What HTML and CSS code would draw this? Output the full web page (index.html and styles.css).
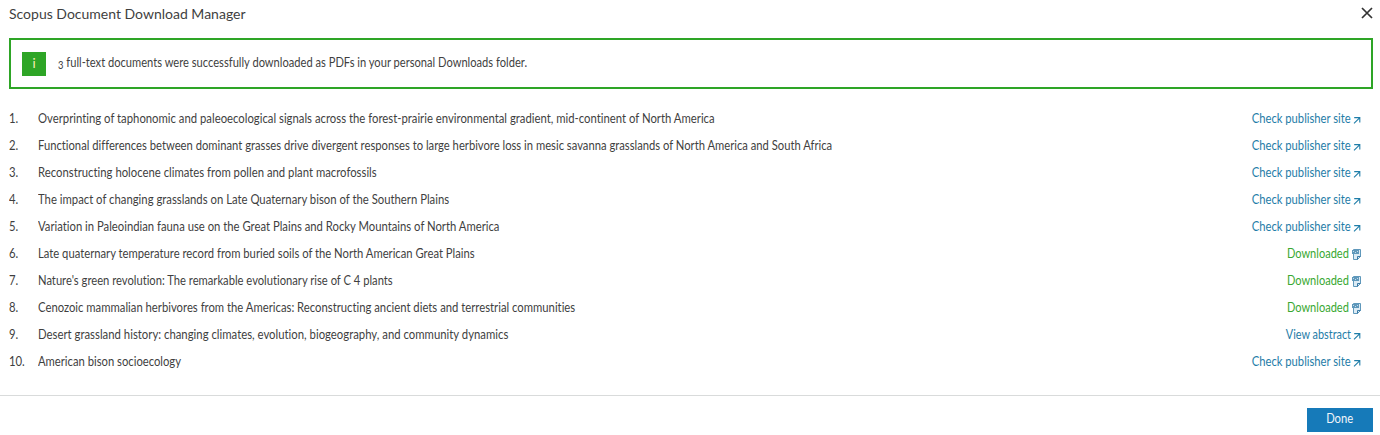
FILE: index.html
```
<!DOCTYPE html>
<html lang="en">
<head>
<meta charset="utf-8">
<title>Scopus Document Download Manager</title>
<link rel="stylesheet" href="styles.css">
</head>
<body>
<svg class="defs" aria-hidden="true">
  <symbol id="arrow" viewBox="0 0 8 8"><path d="M1.2 1.6H6.8V6.5M6.6 1.8 1 7.4" fill="none" stroke="currentColor" stroke-width="1.1"/></symbol>
  <symbol id="pdf" viewBox="0 0 9 11"><path d="M1.5.5h7v7l-3 3h-4z" fill="#dcebf4" stroke="#5f98bb"/><path d="M8.5 7.5h-3v3" fill="none" stroke="#3879a6"/><path d="M0 1h7v4H0z" fill="#5f98bb"/><path d="M1 2.5h1M3 3.5h1M5 2.5h1" stroke="#c5dcea"/></symbol>
</svg>
<header class="header">
  <h1 class="title">Scopus Document Download Manager</h1>
  <svg class="close" viewBox="0 0 12 12"><path d="M1 1l10 10M11 1 1 11" fill="none" stroke="#333" stroke-width="1.7"/></svg>
</header>
<div class="notice">
  <span class="info">i</span>
  <p class="message"><span class="oldstyle">3</span> full-text documents were successfully downloaded as PDFs in your personal Downloads folder.</p>
</div>
<ul class="documents">
  <li class="row"><span class="num">1.</span><span class="name">Overprinting of taphonomic and paleoecological signals across the forest-prairie environmental gradient, mid-continent of North America</span><a class="link"><span class="label">Check publisher site</span><svg class="arrow"><use href="#arrow"/></svg></a></li>
  <li class="row"><span class="num">2.</span><span class="name">Functional differences between dominant grasses drive divergent responses to large herbivore loss in mesic savanna grasslands of North America and South Africa</span><a class="link"><span class="label">Check publisher site</span><svg class="arrow"><use href="#arrow"/></svg></a></li>
  <li class="row"><span class="num">3.</span><span class="name">Reconstructing holocene climates from pollen and plant macrofossils</span><a class="link"><span class="label">Check publisher site</span><svg class="arrow"><use href="#arrow"/></svg></a></li>
  <li class="row"><span class="num">4.</span><span class="name">The impact of changing grasslands on Late Quaternary bison of the Southern Plains</span><a class="link"><span class="label">Check publisher site</span><svg class="arrow"><use href="#arrow"/></svg></a></li>
  <li class="row"><span class="num">5.</span><span class="name">Variation in Paleoindian fauna use on the Great Plains and Rocky Mountains of North America</span><a class="link"><span class="label">Check publisher site</span><svg class="arrow"><use href="#arrow"/></svg></a></li>
  <li class="row"><span class="num">6.</span><span class="name">Late quaternary temperature record from buried soils of the North American Great Plains</span><a class="link downloaded"><span class="label">Downloaded</span><svg class="pdf"><use href="#pdf"/></svg></a></li>
  <li class="row"><span class="num">7.</span><span class="name">Nature's green revolution: The remarkable evolutionary rise of C 4 plants</span><a class="link downloaded"><span class="label">Downloaded</span><svg class="pdf"><use href="#pdf"/></svg></a></li>
  <li class="row"><span class="num">8.</span><span class="name">Cenozoic mammalian herbivores from the Americas: Reconstructing ancient diets and terrestrial communities</span><a class="link downloaded"><span class="label">Downloaded</span><svg class="pdf"><use href="#pdf"/></svg></a></li>
  <li class="row"><span class="num">9.</span><span class="name">Desert grassland history: changing climates, evolution, biogeography, and community dynamics</span><a class="link abstract"><span class="label">View abstract</span><svg class="arrow"><use href="#arrow"/></svg></a></li>
  <li class="row"><span class="num">10.</span><span class="name">American bison socioecology</span><a class="link"><span class="label">Check publisher site</span><svg class="arrow"><use href="#arrow"/></svg></a></li>
</ul>
<footer class="footer"><button class="done"><span class="caption">Done</span></button></footer>
</body>
</html>
```
FILE: styles.css
```
* { box-sizing: border-box; }
body { margin: 0; background: #fff; color: #3f3f3f; font: 13px/27px Lato, sans-serif; font-variant-ligatures: none; }
.defs { display: none; }
.header { display: flex; justify-content: space-between; height: 38px; padding: 4px 7px 0 9px; }
.title { margin: 0; font-size: 14px; font-weight: 400; line-height: 20px; }
.close { width: 12px; height: 12px; margin-top: 3px; }
.notice { display: flex; align-items: center; height: 51px; margin: 0 7px 0 9px; padding: 0 11px; border: 2px solid #2ea526; }
.info { width: 24px; height: 24px; background: #2ea526; color: #fff0b8; line-height: 22px; text-align: center; }
.message { margin: 0 0 2px 12px; transform: scaleX(0.8564); transform-origin: left; }
.oldstyle { font-size: 11px; vertical-align: -2px; line-height: 0; }
.documents { margin: 0; padding: 16px 19px 20px 9px; list-style: none; }
.row { display: flex; height: 27px; white-space: nowrap; }
.num { width: 28.5px; transform: scaleX(0.87); transform-origin: left; }
.name { flex: 1; transform: scaleX(0.868); transform-origin: left; }
.row:nth-child(1) .name, .row:nth-child(3) .name, .row:nth-child(4) .name { transform: scaleX(0.8705); }
.row:nth-child(2) .name { transform: scaleX(0.863); }
.row:nth-child(6) .name, .row:nth-child(10) .name { transform: scaleX(0.865); }
.row:nth-child(7) .name { transform: scaleX(0.861); }
.row:nth-child(9) .name { transform: scaleX(0.8725); }
.link { display: flex; align-items: center; color: #1f7da8; }
.label { transform: scaleX(0.863); transform-origin: right; }
.downloaded { color: #38a832; }
.downloaded .label { transform: scaleX(0.85); }
.abstract .label { transform: scaleX(0.835); }
.arrow { width: 8px; height: 8px; margin: 3px 0 0 2px; }
.pdf { width: 9px; height: 11px; margin: 2px 0 0 3px; }
.footer { display: flex; justify-content: flex-end; height: 40px; padding: 12px 7px 0; border-top: 1px solid #d9dbdb; }
.done { width: 66px; height: 24px; padding: 0 0 3px; border: 0; background: #167ab9; color: #f0f6fa; font: 13px/21px Lato, sans-serif; }
.caption { display: inline-block; transform: scaleX(0.863); }
```
